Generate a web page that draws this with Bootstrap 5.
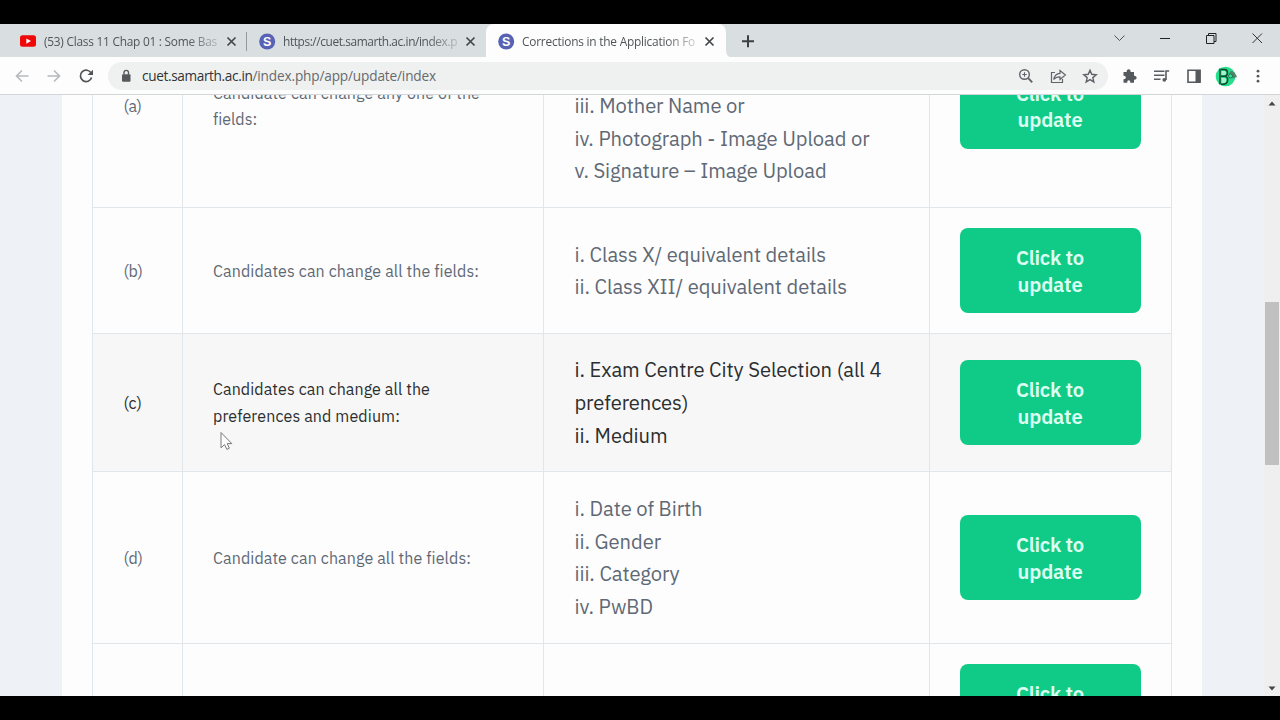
<!DOCTYPE html>
<html lang="en">
<head>
<meta charset="utf-8">
<meta name="viewport" content="width=device-width, initial-scale=1">
<title>Corrections in the Application Form</title>
<link href="https://cdn.jsdelivr.net/npm/bootstrap@5.3.0/dist/css/bootstrap.min.css" rel="stylesheet">
<style>
  body { width: 1280px; height: 720px; overflow: hidden; background: #000; font-family: "IBM Plex Sans", "Noto Sans", "Liberation Sans", sans-serif; }
  .window { height: 672px; margin-top: 24px; background: #fdfdfd; }
  svg { display: block; flex: none; }

  /* tab strip */
  .tabstrip { height: 38px; background: linear-gradient(#d9dee1 0 33.5px, #fdfdfd 33.5px); font: 11.9px/34px "Open Sans", sans-serif; color: #505558; }
  .tab-item { height: 34px; width: 239px; padding-left: 12px; }
  .tab-item.first { width: 247px; padding-left: 20px; }
  .tab-item.current { height: 38px; width: 240px; background: #fdfdfd; border-radius: 8px 8px 0 0; }
  .tab-item .caption { width: 174px; flex: none; overflow: hidden; margin-left: 7px; white-space: nowrap; -webkit-mask-image: linear-gradient(90deg, #000 82%, rgba(0,0,0,.25)); }
  .tab-item .favicon { width: 17px; }
  .tab-item .x { margin-left: 8px; }
  .split { width: 1px; height: 19px; background: #94999c; margin-left: 9px; }

  /* toolbar */
  .toolbar { height: 32px; background: #fdfdfd; padding-left: 14px; color: #5f6368; }
  .omnibox { width: 1000px; height: 28px; border-radius: 14px; background: #eff1f1; margin-left: 13px; padding: 0 10px 0 12px; }
  .address { font: 13.6px/28px "Open Sans", sans-serif; color: #666a6d; margin-left: 9px; }
  .address .host { color: #303336; }
  .toolrule { height: 1px; background: #d3d6d8; }

  /* page */
  .viewport { height: 601px; background: #eef2f6; overflow: hidden; }
  .sheet { width: 1140px; margin-left: 62px; background: #fdfdfd; padding-left: 30px; height: 601px; }
  .fields { table-layout: fixed; width: 1079px; margin: -91px 0 0; border-collapse: collapse; }
  .fields td { border: 1px solid #e1e6ea; padding: 0 30px; vertical-align: middle; background: #fdfdfd; color: #5f6975; white-space: nowrap; }
  .fields .hovered td { background: #f7f7f7; color: #2b2e30; }
  .fields .note { font-size: 16px; line-height: 26.2px; padding-top: 1px; }
  .fields .note:first-child { padding-left: 30.5px; }
  .fields .items { font-size: 20.2px; line-height: 32.65px; padding-left: 30.5px; padding-top: 1.5px; }
  .fields .items.tail { padding-top: 66px; }
  .btn-update { width: 181px; height: 85px; border: 0; border-radius: 8px; padding: 2px 1px 0 0; background: #10cb87; color: #dcfff2; font-size: 20.2px; line-height: 26.2px; font-weight: 600; display: block; }
  .btn-update:hover { background: #10cb87; color: #dcfff2; }
  .scrollbar-y { width: 16px; background: #efefef; padding: 6px 0 5px; }
  .thumb { width: 14px; height: 163px; background: #c0c0c0; margin-top: 196px; }
  .pointer { left: 220px; top: 431px; }
</style>
</head>
<body>
<div class="window d-flex flex-column">
  <div class="tabstrip d-flex align-items-start">
    <div class="tab-item first d-flex align-items-center">
      <svg class="favicon" width="17" height="12" viewBox="0 0 17 12"><rect width="16" height="11.5" y=".3" rx="2.5" fill="#f00808"/><path d="M6.3 3.4v5.3L11 6z" fill="#fff"/></svg>
      <span class="caption"><span data-w="173">(53) Class 11 Chap 01 : Some Bas</span></span>
      <svg class="x" width="11" height="11" viewBox="0 0 11 11"><path d="M1.500 1.500l8 8m0-8l-8 8" stroke="#43474a" stroke-width="1.7"/></svg>
      <span class="split"></span>
    </div>
    <div class="tab-item d-flex align-items-center">
      <svg class="favicon" width="17" height="17" viewBox="0 0 17 17"><circle cx="8.2" cy="8.5" r="8" fill="#5862b5"/><text x="8.2" y="13" text-anchor="middle" font-family="Liberation Sans" font-weight="700" font-size="12.5" fill="#fff">S</text></svg>
      <span class="caption"><span data-w="174">https://cuet.samarth.ac.in/index.p</span></span>
      <svg class="x" width="11" height="11" viewBox="0 0 11 11"><path d="M1.500 1.500l8 8m0-8l-8 8" stroke="#43474a" stroke-width="1.7"/></svg>
    </div>
    <div class="tab-item current d-flex align-items-center pb-1">
      <svg class="favicon" width="17" height="17" viewBox="0 0 17 17"><circle cx="8.2" cy="8.5" r="8" fill="#5862b5"/><text x="8.2" y="13" text-anchor="middle" font-family="Liberation Sans" font-weight="700" font-size="12.5" fill="#fff">S</text></svg>
      <span class="caption"><span data-w="173">Corrections in the Application Fo</span></span>
      <svg class="x" width="11" height="11" viewBox="0 0 11 11"><path d="M1.500 1.500l8 8m0-8l-8 8" stroke="#43474a" stroke-width="1.7"/></svg>
    </div>
    <svg width="554" height="34" viewBox="726 24 554 34" fill="none">
      <path d="M726 50q0 8 8 8h-8z" fill="#fdfdfd"/>
      <path d="M742 41.2h12M748 35.2v12" stroke="#3c4043" stroke-width="2"/>
      <path d="M1114.5 35.5l5 5 5-5" stroke="#505457"/>
      <path d="M1160 38.5h10" stroke="#222"/>
      <path d="M1206.5 35.5h7.5v8h-7.5zM1208.500 35.500v-2h7.500v8h-2" stroke="#222"/>
      <path d="M1252.500 33.500l9.500 9.500m0-9.500l-9.500 9.500" stroke="#333"/>
    </svg>
  </div>
  <div class="toolbar d-flex align-items-start">
    <svg width="81" height="28" viewBox="14 62 81 28" fill="none" stroke-width="1.600">
      <path d="M28.500 76H16.500m5.500-5.500L16.500 76l5.500 5.500M47.500 76h12m-5.500-5.500l5.500 5.500-5.500 5.500" stroke="#b7babc"/>
      <path d="M91.200 73.200a5.700 5.700 0 1 0 .4 4.300" stroke="#505457" stroke-width="1.700"/><path d="M93 69.700v5.300h-5.500z" fill="#505457"/>
    </svg>
    <div class="omnibox d-flex align-items-center">
      <svg width="13" height="14" viewBox="0 0 13 14"><rect x="2" y="5.300" width="8.500" height="7.500" rx="1" fill="#55595c"/><path d="M4 5.500V3.600a2.200 2.200 0 0 1 4.500 0v1.900" stroke="#55595c" stroke-width="1.400" fill="none"/></svg>
      <span class="address text-nowrap"><span class="host" data-w="110.500">cuet.samarth.ac.in</span><span data-w="183.500">/index.php/app/update/index</span></span>
      <svg class="ms-auto" width="80" height="28" viewBox="1018 62 80 28" fill="none" stroke="#5f6368" stroke-width="1.400">
        <circle cx="1024.500" cy="74.500" r="4.800"/><path d="M1028.200 78.200l4 4.200" stroke-width="1.900"/><path d="M1022.300 74.500h4.400m-2.200-2.200v4.400" stroke-width="1.100"/>
        <path d="M1055 72.500h-3.500v10h11v-3.500" stroke-width="1.200"/><path d="M1053.700 79.500c.8-4 3-6 6.300-6.200v-2.800l5.400 4.500-5.400 4.500v-2.700c-3 0-4.800.800-6.300 2.700z" stroke-width="1.200"/>
        <path d="M1090 70.200l1.750 4.100 4.450.4-3.370 2.920 1 4.350-3.830-2.300-3.830 2.300 1-4.350-3.370-2.920 4.450-.4z"/>
      </svg>
    </div>
    <svg width="172" height="28" viewBox="1108 62 172 28" fill="none">
      <path d="M1123.500 72h3.200c-.6-3.800 4.500-3.800 3.900 0h3.400v3.700c3.500-.3 3.500 4.300 0 4v3.100h-3.700c.2-3.300-3.300-3.300-3.100 0h-3.700v-3.600c3.100.1 3.100-3.600 0-3.500z" fill="#55595c"/>
      <path d="M1154 71.200h10.500M1154 75.200h10.500M1154 79.200h6.500" stroke="#5a5e61" stroke-width="1.500"/><circle cx="1164.300" cy="79.800" r="1.900" fill="#5a5e61"/><path d="M1166 80v-9h3.200" stroke="#5a5e61" stroke-width="1.600"/>
      <path d="M1188 70.200h12v12h-12z" stroke="#55595c" stroke-width="1.600"/><path d="M1195.500 70h5v12.500h-5z" fill="#55595c"/>
      <circle cx="1225.500" cy="76.500" r="9.800" fill="#25df8d"/>
      <path d="M1220 68.500v16M1221 69.500h3.500c4 0 4 6.500 0 6.800h-3.500M1224.500 76.300c5 .2 4 8-1.500 8h-2" stroke="#14462d" stroke-width="1.500"/>
      <path d="M1221.500 71h3c2 0 2 4 0 4h-3zM1221.500 78h3c2.500 0 2 5-.5 5h-2.500z" fill="#a5f2cf"/>
      <path d="M1229 75c0-5 4-5 6.500-1l1.500 3-4 1.500z" fill="#538669"/><circle cx="1230.500" cy="76" r="2" fill="#31e899" stroke="#267251"/>
      <g fill="#55595c"><circle cx="1258" cy="71.200" r="1.400"/><circle cx="1258" cy="76.200" r="1.400"/><circle cx="1258" cy="81.200" r="1.400"/></g>
    </svg>
  </div>
  <div class="toolrule"></div>
  <div class="viewport d-flex justify-content-between">
    <div class="sheet">
      <table class="fields">
        <colgroup><col style="width:90px"><col style="width:361px"><col style="width:386px"><col style="width:242px"></colgroup>
        <tr style="height:203px">
          <td class="note"><span data-w="18">(a)</span></td>
          <td class="note pt-0"><span data-w="267">Candidate can change any one of the</span><br><span data-w="44">fields:</span></td>
          <td class="items tail"><span data-w="170">iii. Mother Name or</span><br><span data-w="295">iv. Photograph - Image Upload or</span><br><span data-w="252">v. Signature – Image Upload</span></td>
          <td><button class="btn btn-update"><span data-w="68">Click to</span><br><span data-w="65">update</span></button></td>
        </tr>
        <tr style="height:126px">
          <td class="note"><span data-w="19">(b)</span></td>
          <td class="note"><span data-w="266">Candidates can change all the fields:</span></td>
          <td class="items"><span data-w="251.5">i. Class X/ equivalent details</span><br><span data-w="272.5">ii. Class XII/ equivalent details</span></td>
          <td><button class="btn btn-update"><span data-w="68">Click to</span><br><span data-w="65">update</span></button></td>
        </tr>
        <tr class="hovered" style="height:138px">
          <td class="note"><span data-w="18">(c)</span></td>
          <td class="note pt-0"><span data-w="217">Candidates can change all the</span><br><span data-w="187">preferences and medium:</span></td>
          <td class="items"><span data-w="307">i. Exam Centre City Selection (all 4</span><br><span data-w="114">preferences)</span><br><span data-w="93">ii. Medium</span></td>
          <td><button class="btn btn-update"><span data-w="68">Click to</span><br><span data-w="65">update</span></button></td>
        </tr>
        <tr style="height:172px">
          <td class="note"><span data-w="19">(d)</span></td>
          <td class="note"><span data-w="258">Candidate can change all the fields:</span></td>
          <td class="items"><span data-w="128">i. Date of Birth</span><br><span data-w="86.5">ii. Gender</span><br><span data-w="105">iii. Category</span><br><span data-w="78.5">iv. PwBD</span></td>
          <td><button class="btn btn-update"><span data-w="68">Click to</span><br><span data-w="65">update</span></button></td>
        </tr>
        <tr style="height:126px">
          <td></td><td></td><td></td>
          <td><button class="btn btn-update"><span data-w="68">Click to</span><br><span data-w="65">update</span></button></td>
        </tr>
      </table>
    </div>
    <div class="scrollbar-y d-flex flex-column align-items-center">
      <svg width="8" height="5" viewBox="0 0 8 5"><path d="M4 .5L7.500 4.500h-7z" fill="#454545"/></svg>
      <div class="thumb"></div>
      <svg class="mt-auto" width="8" height="5" viewBox="0 0 8 5"><path d="M4 4.500L.5.500h7z" fill="#454545"/></svg>
    </div>
  </div>
</div>
<svg class="pointer position-absolute" width="14" height="20" viewBox="0 0 14 20"><path d="M1 1.500v15.300l3.500-3.200 2.400 4.800 2.500-1.200-2.200-4.600h4.600z" fill="#fcfcfc" stroke="#777a7c"/></svg>
<script src="https://cdn.jsdelivr.net/npm/bootstrap@5.3.0/dist/js/bootstrap.bundle.min.js"></script>
<script>
  // Track each line of text out to its measure.
  document.querySelectorAll('[data-w]').forEach(function (el) {
    var gap = (parseFloat(el.dataset.w) - el.getBoundingClientRect().width) / el.textContent.length;
    el.style.letterSpacing = gap.toFixed(3) + 'px';
  });
</script>
</body>
</html>
